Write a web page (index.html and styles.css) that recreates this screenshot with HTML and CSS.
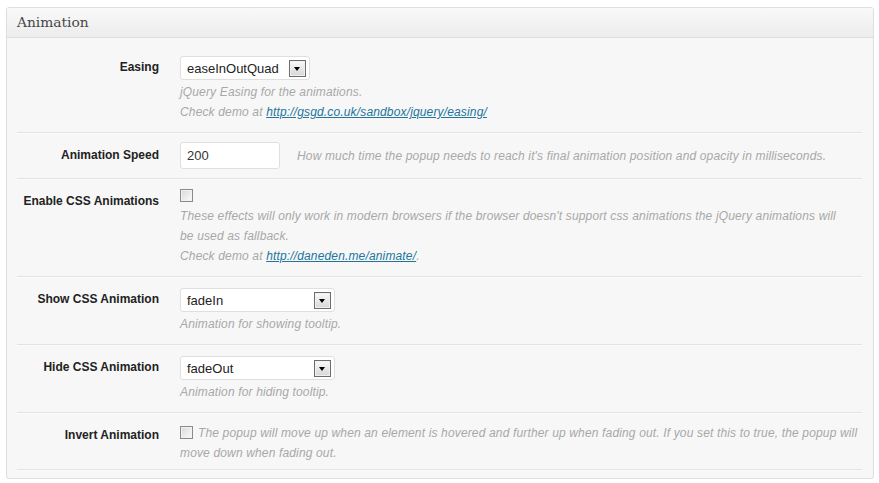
FILE: index.html
```html
<!DOCTYPE html>
<html>
<head>
<meta charset="utf-8">
<link rel="stylesheet" href="styles.css">
</head>
<body>
<div class="panel">
  <h3 class="panel-title">Animation</h3>
  <div class="panel-body">
    <div class="row row-first">
      <div class="label">Easing</div>
      <div class="field">
        <div class="select select-easing"><span class="select-text">easeInOutQuad</span><span class="arrow"></span></div>
        <p class="desc">jQuery Easing for the animations.<br>Check demo at <a href="#">http://gsgd.co.uk/sandbox/jquery/easing/</a></p>
      </div>
    </div>
    <div class="row">
      <div class="label">Animation Speed</div>
      <div class="field field-inline">
        <div class="input">200</div>
        <span class="desc desc-inline">How much time the popup needs to reach it's final animation position and opacity in milliseconds.</span>
      </div>
    </div>
    <div class="row">
      <div class="label">Enable CSS Animations</div>
      <div class="field">
        <span class="checkbox"></span>
        <p class="desc desc-check">These effects will only work in modern browsers if the browser doesn't support css animations the jQuery animations will be used as fallback.<br>Check demo at <a href="#">http://daneden.me/animate/</a>.</p>
      </div>
    </div>
    <div class="row">
      <div class="label">Show CSS Animation</div>
      <div class="field">
        <div class="select select-anim"><span class="select-text">fadeIn</span><span class="arrow"></span></div>
        <p class="desc">Animation for showing tooltip.</p>
      </div>
    </div>
    <div class="row">
      <div class="label">Hide CSS Animation</div>
      <div class="field">
        <div class="select select-anim"><span class="select-text">fadeOut</span><span class="arrow"></span></div>
        <p class="desc">Animation for hiding tooltip.</p>
      </div>
    </div>
    <div class="row row-last">
      <div class="label">Invert Animation</div>
      <div class="field">
        <p class="desc desc-wrap"><span class="checkbox checkbox-inline"></span>The popup will move up when an element is hovered and further up when fading out. If you set this to true, the popup will move down when fading out.</p>
      </div>
    </div>
  </div>
</div>
</body>
</html>
```

FILE: styles.css
```css
html, body {
  margin: 0;
  padding: 0;
  background: #fff;
}
body {
  padding: 7px 5px 0 6px;
  font-family: "Liberation Sans", Arial, sans-serif;
  font-size: 12px;
  color: #333;
}
.panel {
  width: 866px;
  height: 470px;
  border: 1px solid #dfdfdf;
  border-radius: 3px;
  background: #f7f7f7;
  box-shadow: 0 1px 1px rgba(0,0,0,0.04);
  overflow: hidden;
}
.panel-title {
  margin: 0;
  height: 29px;
  line-height: 29px;
  padding: 0 10px;
  font-family: "DejaVu Serif", Georgia, serif;
  font-weight: normal;
  font-size: 13.8px;
  color: #464646;
  background: linear-gradient(to bottom, #f9f9f9, #ececec);
  border-bottom: 1px solid #dfdfdf;
}
.panel-body {
  padding: 0 11px 0 10px;
}
.row {
  display: grid;
  grid-template-columns: 142px 1fr;
  column-gap: 21px;
  padding: 10px 0 10px;
  border-bottom: 1px solid #e3e3e3;
  box-shadow: 0 1px 0 #fbfbfb;
}
.row-first {
  padding-top: 17px;
}
.row-last {
  padding-bottom: 6px;
}
.label {
  text-align: right;
  font-weight: bold;
  font-size: 12px;
  line-height: 24px;
  color: #222;
}
.field {
  min-width: 0;
}
.field-inline {
  display: flex;
  align-items: center;
  gap: 17px;
}
.select {
  display: flex;
  align-items: center;
  justify-content: space-between;
  box-sizing: border-box;
  height: 24px;
  margin-top: 1px;
  padding: 0 3px 0 6px;
  background: #fff;
  border: 1px solid #dfdfdf;
  border-radius: 3px;
  font-size: 13px;
  color: #222;
}
.select-easing { width: 130px; }
.select-anim { width: 155px; }
.arrow {
  position: relative;
  box-sizing: border-box;
  width: 17px;
  height: 17px;
  border: 1px solid #6d6d6d;
  box-shadow: inset 0 0 0 1px #f0f0f0;
  background: linear-gradient(to bottom, #fafafa, #d6d6d6);
}
.arrow::after {
  content: "";
  position: absolute;
  left: 4px;
  top: 6px;
  border-left: 3.5px solid transparent;
  border-right: 3.5px solid transparent;
  border-top: 4px solid #000;
}
.input {
  box-sizing: border-box;
  width: 100px;
  height: 27px;
  margin-top: -1px;
  margin-bottom: -1px;
  padding: 0 6px;
  line-height: 25px;
  background: #fff;
  border: 1px solid #dfdfdf;
  border-radius: 3px;
  font-size: 13px;
  color: #333;
}
.desc {
  margin: 2px 0 0;
  font-style: italic;
  font-size: 12px;
  letter-spacing: 0.15px;
  line-height: 20px;
  color: #a8a8a8;
}
.desc a {
  color: #21759b;
}
.desc-inline {
  margin: 0;
  white-space: nowrap;
}
.desc-check {
  margin-top: 4px;
  max-width: 668px;
}
.desc-wrap {
  margin: 0;
}
.checkbox {
  display: block;
  box-sizing: border-box;
  width: 13px;
  height: 13px;
  border: 1px solid #8a8a8a;
  box-shadow: inset 0 0 0 1px #f2f2f2;
  background: linear-gradient(135deg, #d8d8d8, #fcfcfc);
}
.checkbox-inline {
  display: inline-block;
  vertical-align: -2px;
  margin-right: 5px;
}
```
